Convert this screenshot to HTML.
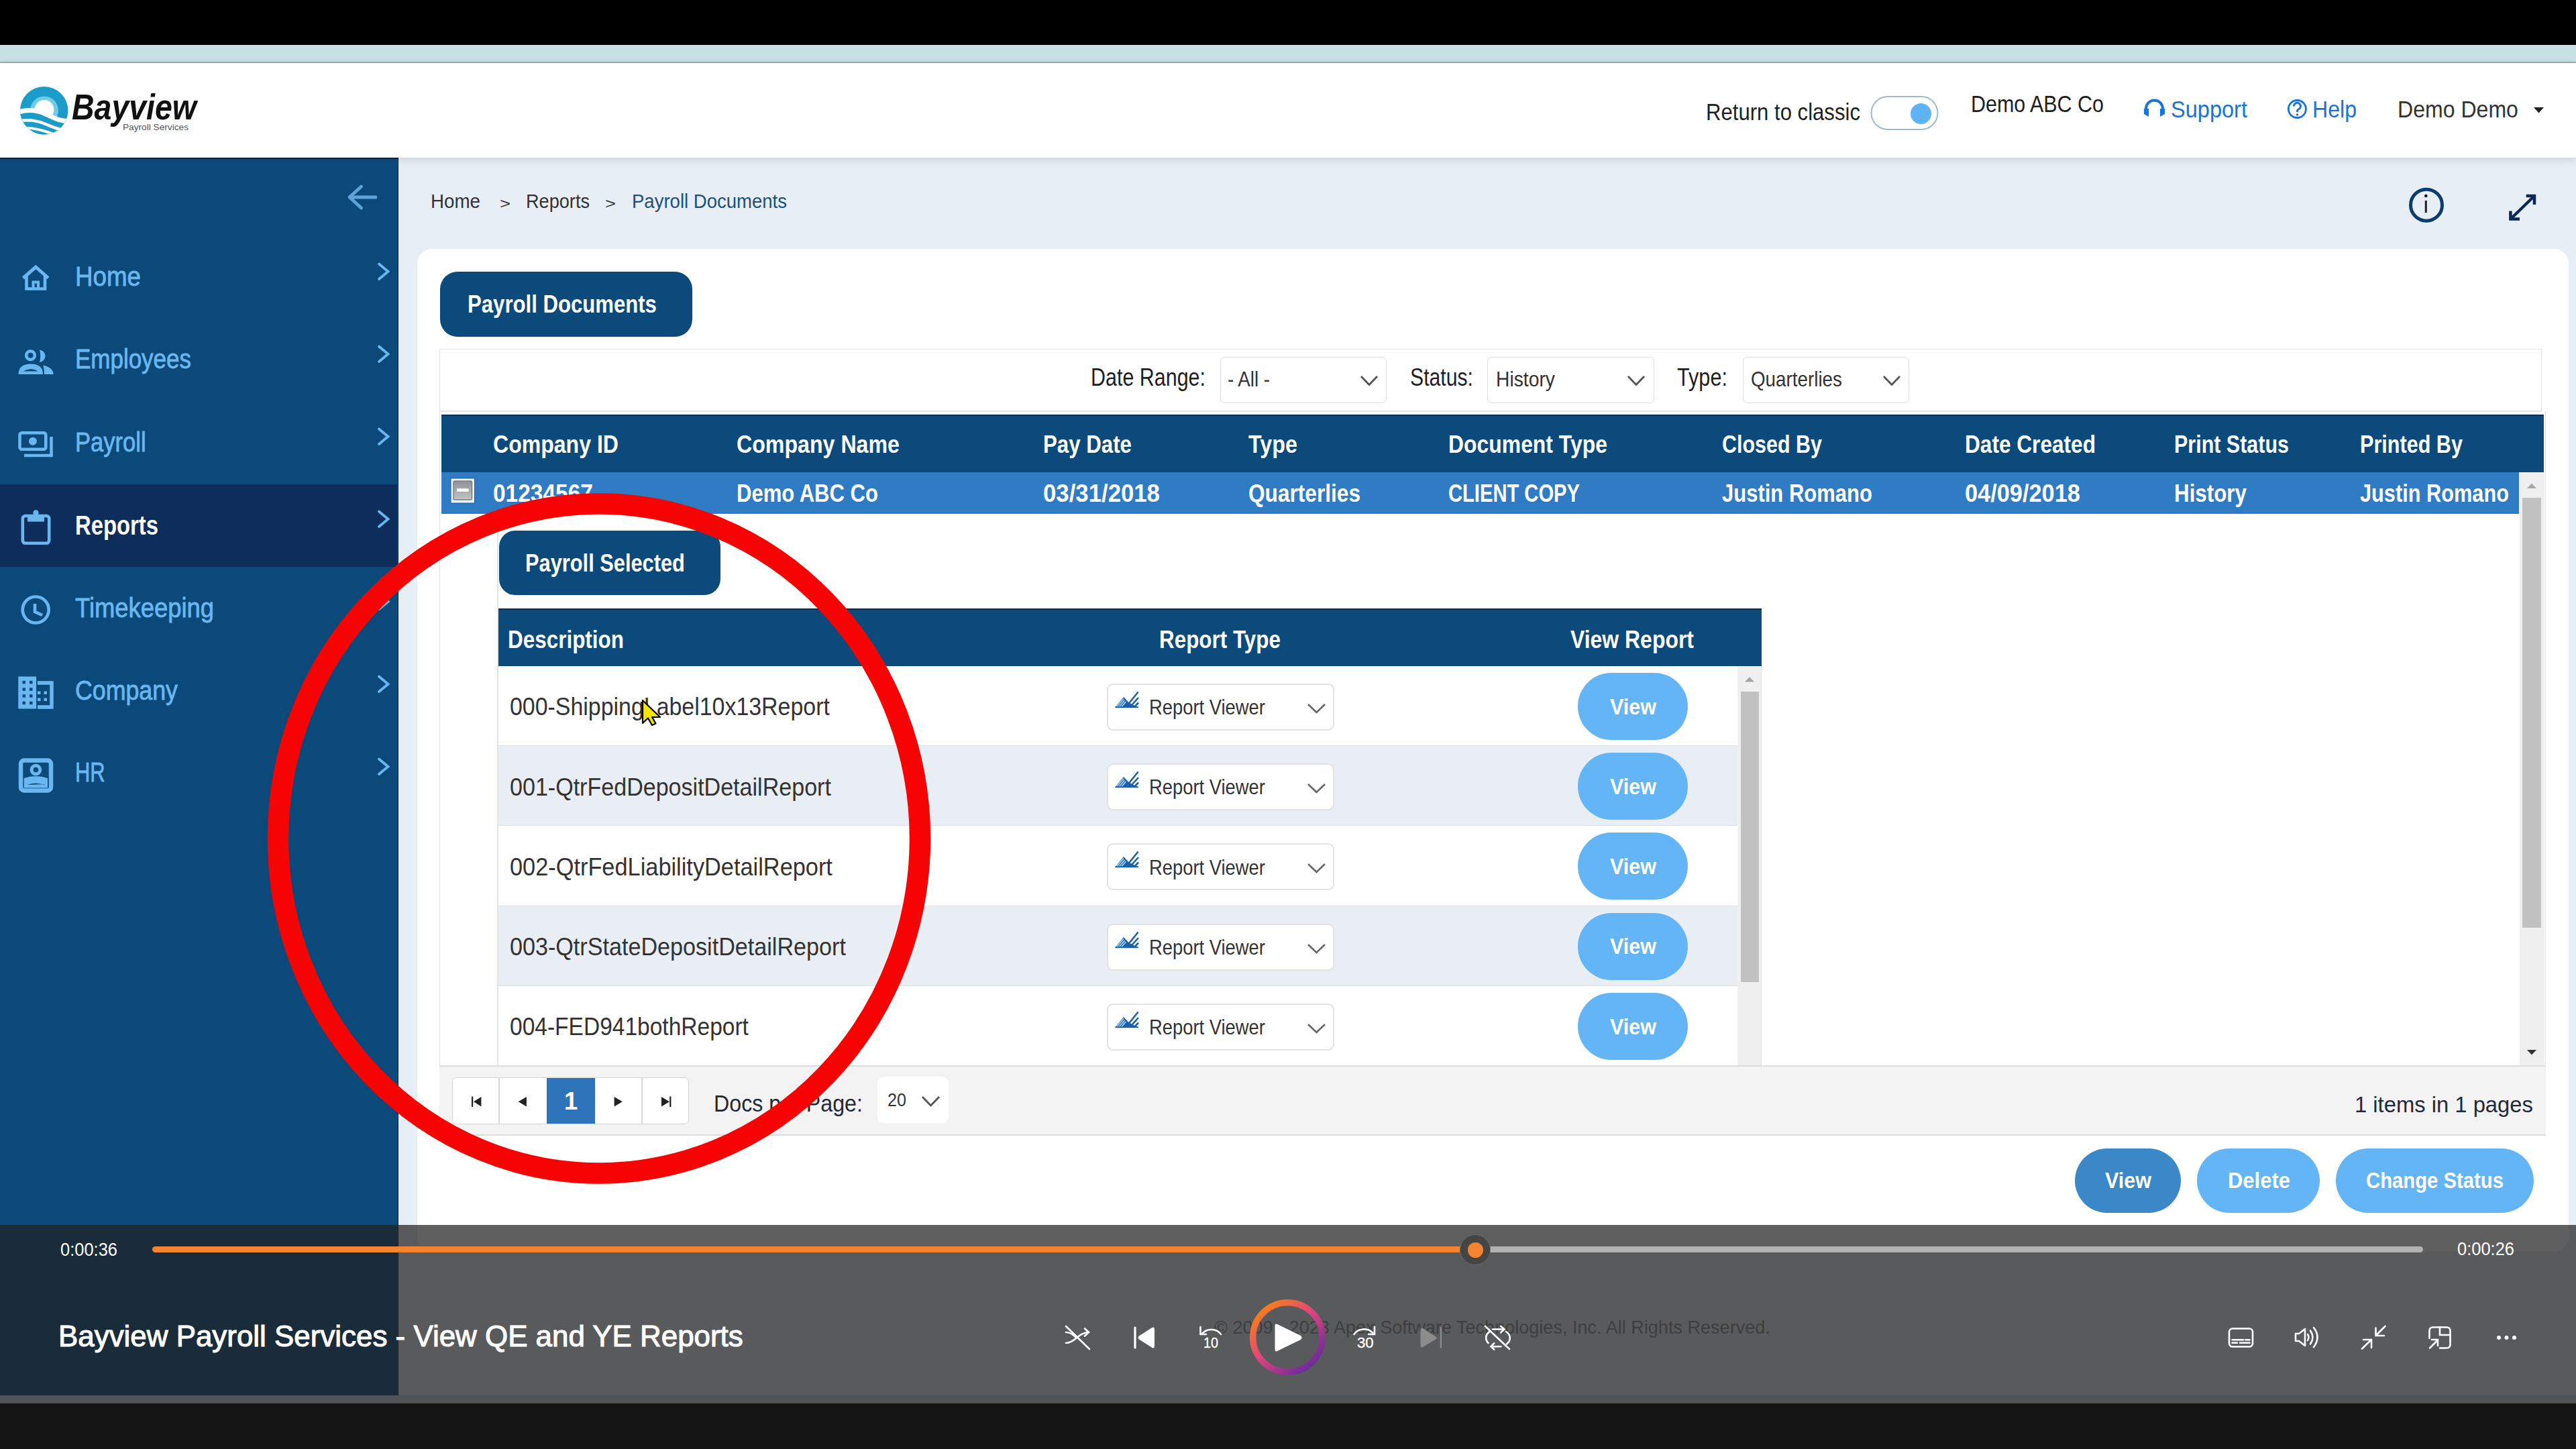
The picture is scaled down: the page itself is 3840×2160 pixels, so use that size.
<!DOCTYPE html>
<html><head><meta charset="utf-8">
<style>
*{margin:0;padding:0;box-sizing:border-box}
html,body{width:3840px;height:2160px;overflow:hidden;background:#e8eef5;font-family:"Liberation Sans",sans-serif}
.a{position:absolute}
.t{position:absolute;white-space:pre;line-height:1;transform-origin:0 0;font-family:"Liberation Sans",sans-serif;z-index:2}
svg{position:absolute;overflow:visible}
</style></head><body>
<!-- top bars -->
<div class="a" style="left:0;top:0;width:3840px;height:67px;background:#000"></div>
<div class="a" style="left:0;top:67px;width:3840px;height:25px;background:#c8dfe6"></div>
<div class="a" style="left:0;top:92px;width:3840px;height:2px;background:#a2abae"></div>
<div class="a" style="left:0;top:94px;width:3840px;height:141px;background:#fff;box-shadow:0 3px 12px rgba(0,0,0,0.13);z-index:1"></div>
<!-- sidebar -->
<div class="a" style="left:0;top:235px;width:594px;height:1845px;background:#0a497a;border-right:1px solid #08244c;border-top:2px solid #06204a;z-index:1"></div>
<div class="a" style="left:0;top:722px;width:592px;height:123px;background:#0d2d5b;z-index:1"></div>
<!-- card -->
<div class="a" style="left:622px;top:371px;width:3207px;height:1495px;background:#fff;border-radius:22px"></div>
<div class="a" style="left:656px;top:405px;width:376px;height:97px;background:#0b4a7b;border-radius:26px"></div>
<!-- filter box -->
<div class="a" style="left:655px;top:520px;width:3134px;height:94px;border:1.5px solid #e4e4e4;border-bottom:2px solid #e4e2ec"></div>
<div class="a" style="left:1819px;top:532px;width:248px;height:69px;border:1.5px solid #dedede;border-radius:7px;background:#fff"></div>
<div class="a" style="left:2217px;top:532px;width:249px;height:69px;border:1.5px solid #dedede;border-radius:7px;background:#fff"></div>
<div class="a" style="left:2598px;top:532px;width:248px;height:69px;border:1.5px solid #dedede;border-radius:7px;background:#fff"></div>
<!-- grid -->
<div class="a" style="left:655px;top:613px;width:3140px;height:1080px;border-left:1.5px solid #e0e0e0;border-right:1.5px solid #e0e0e0"></div>
<div class="a" style="left:658px;top:618px;width:3134px;height:86px;background:#0b4a7b;border-top:2px solid #08305a"></div>
<div class="a" style="left:658px;top:704px;width:3097px;height:62px;background:#2f7bc4"></div>
<div class="a" style="left:3756px;top:704px;width:37px;height:885px;background:#efefef"></div>
<div class="a" style="left:3760px;top:742px;width:28px;height:641px;background:#c1c1c1"></div>
<!-- detail left border -->
<div class="a" style="left:741px;top:766px;width:1.5px;height:823px;background:#e4e4e4"></div>
<div class="a" style="left:744px;top:791px;width:330px;height:96px;background:#0b4a7b;border-radius:24px"></div>
<!-- nested grid -->
<div class="a" style="left:743px;top:907px;width:1883px;height:86px;background:#0b4a7b;border-top:2px solid #08305a"></div>
<div id="rows"></div>
<div class="a" style="left:743px;top:993px;width:1847px;height:119px;background:#fff;border-bottom:1.5px solid #dde2e8"></div>
<div class="a" style="left:743px;top:1112px;width:1847px;height:119px;background:#e9eef5;border-bottom:1.5px solid #dde2e8"></div>
<div class="a" style="left:743px;top:1231px;width:1847px;height:120px;background:#fff;border-bottom:1.5px solid #dde2e8"></div>
<div class="a" style="left:743px;top:1351px;width:1847px;height:119px;background:#e9eef5;border-bottom:1.5px solid #dde2e8"></div>
<div class="a" style="left:743px;top:1470px;width:1847px;height:119px;background:#fff"></div>
<div class="a" style="left:2590px;top:993px;width:36px;height:596px;background:#f0f0f0;border-right:1.5px solid #e2e2e2"></div>
<div class="a" style="left:2595px;top:1031px;width:27px;height:433px;background:#c1c1c1"></div>
<!-- pager -->
<div class="a" style="left:655px;top:1588px;width:3140px;height:105px;background:#f3f3f3;border-top:2px solid #dcdcdc;border-bottom:2px solid #dcdcdc"></div>
<div class="a" style="left:674px;top:1606px;width:353px;height:70px;background:#fff;border:1.5px solid #d4d4d4;border-radius:7px"></div>
<div class="a" style="left:743px;top:1607px;width:1.5px;height:68px;background:#d8d8d8"></div>
<div class="a" style="left:815px;top:1607px;width:72px;height:68px;background:#2d74b9"></div>
<div class="a" style="left:956px;top:1607px;width:1.5px;height:68px;background:#d8d8d8"></div>
<div class="a" style="left:1308px;top:1605px;width:106px;height:69px;background:#fff;border-radius:9px"></div>
<!-- action buttons -->
<div class="a" style="left:3093px;top:1712px;width:158px;height:96px;background:#3a88c8;border-radius:48px"></div>
<div class="a" style="left:3275px;top:1712px;width:183px;height:96px;background:#64b5f6;border-radius:48px"></div>
<div class="a" style="left:3482px;top:1712px;width:295px;height:96px;background:#64b5f6;border-radius:48px"></div>
<div class="a" style="left:1650px;top:1019.0px;width:339px;height:70px;background:#fff;border:2px solid #e2e2e2;border-radius:9px"></div>
<div class="a" style="left:2352px;top:1003.0px;width:164px;height:100px;background:#64b5f6;border-radius:50px"></div>
<svg width="40" height="30" style="left:1660px;top:1029.0px;z-index:2" viewBox="0 0 40 30"><path d="M2.4,25.5 L15,10 L23,18.5 L36.6,25.5 Z" fill="#1c60ab"/><path d="M4.5,25 L15,12.5 M8,25 L16.5,15 M11.5,25 L18.5,17" stroke="#a8d6f5" stroke-width="1.6" fill="none"/><path d="M22.5,20 L36.6,2.5 M27,22 L37,11 M31,25 L37,18.5" stroke="#1c60ab" stroke-width="2.6" fill="none"/><rect x="2.4" y="24.2" width="34.5" height="2" fill="#1c60ab"/></svg>
<svg width="30" height="20" style="left:1948px;top:1048.0px;z-index:2" viewBox="0 0 30 20"><path d="M2,2 L14.5,14 L27,2" fill="none" stroke="#666" stroke-width="2.6"/></svg>
<div class="a" style="left:1650px;top:1138.2px;width:339px;height:70px;background:#fff;border:2px solid #e2e2e2;border-radius:9px"></div>
<div class="a" style="left:2352px;top:1122.2px;width:164px;height:100px;background:#64b5f6;border-radius:50px"></div>
<svg width="40" height="30" style="left:1660px;top:1148.2px;z-index:2" viewBox="0 0 40 30"><path d="M2.4,25.5 L15,10 L23,18.5 L36.6,25.5 Z" fill="#1c60ab"/><path d="M4.5,25 L15,12.5 M8,25 L16.5,15 M11.5,25 L18.5,17" stroke="#a8d6f5" stroke-width="1.6" fill="none"/><path d="M22.5,20 L36.6,2.5 M27,22 L37,11 M31,25 L37,18.5" stroke="#1c60ab" stroke-width="2.6" fill="none"/><rect x="2.4" y="24.2" width="34.5" height="2" fill="#1c60ab"/></svg>
<svg width="30" height="20" style="left:1948px;top:1167.2px;z-index:2" viewBox="0 0 30 20"><path d="M2,2 L14.5,14 L27,2" fill="none" stroke="#666" stroke-width="2.6"/></svg>
<div class="a" style="left:1650px;top:1257.4px;width:339px;height:70px;background:#fff;border:2px solid #e2e2e2;border-radius:9px"></div>
<div class="a" style="left:2352px;top:1241.4px;width:164px;height:100px;background:#64b5f6;border-radius:50px"></div>
<svg width="40" height="30" style="left:1660px;top:1267.4px;z-index:2" viewBox="0 0 40 30"><path d="M2.4,25.5 L15,10 L23,18.5 L36.6,25.5 Z" fill="#1c60ab"/><path d="M4.5,25 L15,12.5 M8,25 L16.5,15 M11.5,25 L18.5,17" stroke="#a8d6f5" stroke-width="1.6" fill="none"/><path d="M22.5,20 L36.6,2.5 M27,22 L37,11 M31,25 L37,18.5" stroke="#1c60ab" stroke-width="2.6" fill="none"/><rect x="2.4" y="24.2" width="34.5" height="2" fill="#1c60ab"/></svg>
<svg width="30" height="20" style="left:1948px;top:1286.4px;z-index:2" viewBox="0 0 30 20"><path d="M2,2 L14.5,14 L27,2" fill="none" stroke="#666" stroke-width="2.6"/></svg>
<div class="a" style="left:1650px;top:1376.6px;width:339px;height:70px;background:#fff;border:2px solid #e2e2e2;border-radius:9px"></div>
<div class="a" style="left:2352px;top:1360.6px;width:164px;height:100px;background:#64b5f6;border-radius:50px"></div>
<svg width="40" height="30" style="left:1660px;top:1386.6px;z-index:2" viewBox="0 0 40 30"><path d="M2.4,25.5 L15,10 L23,18.5 L36.6,25.5 Z" fill="#1c60ab"/><path d="M4.5,25 L15,12.5 M8,25 L16.5,15 M11.5,25 L18.5,17" stroke="#a8d6f5" stroke-width="1.6" fill="none"/><path d="M22.5,20 L36.6,2.5 M27,22 L37,11 M31,25 L37,18.5" stroke="#1c60ab" stroke-width="2.6" fill="none"/><rect x="2.4" y="24.2" width="34.5" height="2" fill="#1c60ab"/></svg>
<svg width="30" height="20" style="left:1948px;top:1405.6px;z-index:2" viewBox="0 0 30 20"><path d="M2,2 L14.5,14 L27,2" fill="none" stroke="#666" stroke-width="2.6"/></svg>
<div class="a" style="left:1650px;top:1495.8px;width:339px;height:70px;background:#fff;border:2px solid #e2e2e2;border-radius:9px"></div>
<div class="a" style="left:2352px;top:1479.8px;width:164px;height:100px;background:#64b5f6;border-radius:50px"></div>
<svg width="40" height="30" style="left:1660px;top:1505.8px;z-index:2" viewBox="0 0 40 30"><path d="M2.4,25.5 L15,10 L23,18.5 L36.6,25.5 Z" fill="#1c60ab"/><path d="M4.5,25 L15,12.5 M8,25 L16.5,15 M11.5,25 L18.5,17" stroke="#a8d6f5" stroke-width="1.6" fill="none"/><path d="M22.5,20 L36.6,2.5 M27,22 L37,11 M31,25 L37,18.5" stroke="#1c60ab" stroke-width="2.6" fill="none"/><rect x="2.4" y="24.2" width="34.5" height="2" fill="#1c60ab"/></svg>
<svg width="30" height="20" style="left:1948px;top:1524.8px;z-index:2" viewBox="0 0 30 20"><path d="M2,2 L14.5,14 L27,2" fill="none" stroke="#666" stroke-width="2.6"/></svg>
<div class="t" style="left:2543.0px;top:149.5px;font-size:34.88px;font-weight:400;color:#1f1f1f;transform:scaleX(0.8920);">Return to classic</div>
<div class="t" style="left:2938.0px;top:137.5px;font-size:34.88px;font-weight:400;color:#1f1f1f;transform:scaleX(0.8729);">Demo ABC Co</div>
<div class="t" style="left:3236.0px;top:145.5px;font-size:34.88px;font-weight:400;color:#1a73d6;transform:scaleX(0.9330);">Support</div>
<div class="t" style="left:3447.0px;top:145.5px;font-size:34.88px;font-weight:400;color:#1a73d6;transform:scaleX(0.9199);">Help</div>
<div class="t" style="left:3574.0px;top:145.5px;font-size:34.88px;font-weight:400;color:#333333;transform:scaleX(0.9193);">Demo Demo</div>
<div class="t" style="left:642.0px;top:286.4px;font-size:29.07px;font-weight:400;color:#333333;transform:scaleX(0.9543);">Home</div>
<div class="t" style="left:745.0px;top:292.6px;font-size:21.80px;font-weight:400;color:#333333;transform:scaleX(1.2565);">&gt;</div>
<div class="t" style="left:784.0px;top:286.4px;font-size:29.07px;font-weight:400;color:#333333;transform:scaleX(0.9333);">Reports</div>
<div class="t" style="left:902.0px;top:292.6px;font-size:21.80px;font-weight:400;color:#333333;transform:scaleX(1.2565);">&gt;</div>
<div class="t" style="left:942.0px;top:286.4px;font-size:29.07px;font-weight:400;color:#1d4f7c;transform:scaleX(0.9469);">Payroll Documents</div>
<div class="t" style="left:697.0px;top:435.1px;font-size:37.79px;font-weight:700;color:#ffffff;transform:scaleX(0.8238);">Payroll Documents</div>
<div class="t" style="left:1626.0px;top:545.3px;font-size:36.34px;font-weight:400;color:#1f1f1f;transform:scaleX(0.8381);">Date Range:</div>
<div class="t" style="left:2102.0px;top:545.3px;font-size:36.34px;font-weight:400;color:#1f1f1f;transform:scaleX(0.8310);">Status:</div>
<div class="t" style="left:2500.0px;top:545.3px;font-size:36.34px;font-weight:400;color:#1f1f1f;transform:scaleX(0.8438);">Type:</div>
<div class="t" style="left:1830.0px;top:549.0px;font-size:31.98px;font-weight:400;color:#333333;transform:scaleX(0.8649);">- All -</div>
<div class="t" style="left:2230.0px;top:549.0px;font-size:31.98px;font-weight:400;color:#333333;transform:scaleX(0.8845);">History</div>
<div class="t" style="left:2610.0px;top:549.0px;font-size:31.98px;font-weight:400;color:#333333;transform:scaleX(0.8696);">Quarterlies</div>
<div class="t" style="left:735.0px;top:645.3px;font-size:36.34px;font-weight:700;color:#ffffff;transform:scaleX(0.8821);">Company ID</div>
<div class="t" style="left:1098.0px;top:645.3px;font-size:36.34px;font-weight:700;color:#ffffff;transform:scaleX(0.8848);">Company Name</div>
<div class="t" style="left:1555.0px;top:645.3px;font-size:36.34px;font-weight:700;color:#ffffff;transform:scaleX(0.8599);">Pay Date</div>
<div class="t" style="left:1861.0px;top:645.3px;font-size:36.34px;font-weight:700;color:#ffffff;transform:scaleX(0.8890);">Type</div>
<div class="t" style="left:2159.0px;top:645.3px;font-size:36.34px;font-weight:700;color:#ffffff;transform:scaleX(0.8782);">Document Type</div>
<div class="t" style="left:2567.0px;top:645.3px;font-size:36.34px;font-weight:700;color:#ffffff;transform:scaleX(0.8385);">Closed By</div>
<div class="t" style="left:2929.0px;top:645.3px;font-size:36.34px;font-weight:700;color:#ffffff;transform:scaleX(0.8699);">Date Created</div>
<div class="t" style="left:3241.0px;top:645.3px;font-size:36.34px;font-weight:700;color:#ffffff;transform:scaleX(0.8386);">Print Status</div>
<div class="t" style="left:3518.0px;top:645.3px;font-size:36.34px;font-weight:700;color:#ffffff;transform:scaleX(0.8419);">Printed By</div>
<div class="t" style="left:735.0px;top:718.3px;font-size:36.34px;font-weight:700;color:#ffffff;transform:scaleX(0.9216);">01234567</div>
<div class="t" style="left:1098.0px;top:718.3px;font-size:36.34px;font-weight:700;color:#ffffff;transform:scaleX(0.8544);">Demo ABC Co</div>
<div class="t" style="left:1555.0px;top:718.3px;font-size:36.34px;font-weight:700;color:#ffffff;transform:scaleX(0.9567);">03/31/2018</div>
<div class="t" style="left:1861.0px;top:718.3px;font-size:36.34px;font-weight:700;color:#ffffff;transform:scaleX(0.8704);">Quarterlies</div>
<div class="t" style="left:2159.0px;top:718.3px;font-size:36.34px;font-weight:700;color:#ffffff;transform:scaleX(0.8023);">CLIENT COPY</div>
<div class="t" style="left:2567.0px;top:718.3px;font-size:36.34px;font-weight:700;color:#ffffff;transform:scaleX(0.8535);">Justin Romano</div>
<div class="t" style="left:2929.0px;top:718.3px;font-size:36.34px;font-weight:700;color:#ffffff;transform:scaleX(0.9457);">04/09/2018</div>
<div class="t" style="left:3241.0px;top:718.3px;font-size:36.34px;font-weight:700;color:#ffffff;transform:scaleX(0.8627);">History</div>
<div class="t" style="left:3518.0px;top:718.3px;font-size:36.34px;font-weight:700;color:#ffffff;transform:scaleX(0.8459);">Justin Romano</div>
<div class="t" style="left:783.0px;top:821.1px;font-size:37.79px;font-weight:700;color:#ffffff;transform:scaleX(0.8151);">Payroll Selected</div>
<div class="t" style="left:757.0px;top:935.1px;font-size:37.79px;font-weight:700;color:#ffffff;transform:scaleX(0.8322);">Description</div>
<div class="t" style="left:1728.0px;top:935.1px;font-size:37.79px;font-weight:700;color:#ffffff;transform:scaleX(0.8315);">Report Type</div>
<div class="t" style="left:2341.0px;top:935.1px;font-size:37.79px;font-weight:700;color:#ffffff;transform:scaleX(0.8452);">View Report</div>
<div class="t" style="left:760.0px;top:1036.3px;font-size:36.34px;font-weight:400;color:#333333;transform:scaleX(0.9332);">000-ShippingLabel10x13Report</div>
<div class="t" style="left:1713.0px;top:1039.2px;font-size:30.52px;font-weight:400;color:#333333;transform:scaleX(0.8971);">Report Viewer</div>
<div class="t" style="left:2400.0px;top:1036.8px;font-size:33.43px;font-weight:700;color:#ffffff;transform:scaleX(0.9130);">View</div>
<div class="t" style="left:760.0px;top:1155.5px;font-size:36.34px;font-weight:400;color:#333333;transform:scaleX(0.9374);">001-QtrFedDepositDetailReport</div>
<div class="t" style="left:1713.0px;top:1158.4px;font-size:30.52px;font-weight:400;color:#333333;transform:scaleX(0.8971);">Report Viewer</div>
<div class="t" style="left:2400.0px;top:1156.0px;font-size:33.43px;font-weight:700;color:#ffffff;transform:scaleX(0.9130);">View</div>
<div class="t" style="left:760.0px;top:1274.7px;font-size:36.34px;font-weight:400;color:#333333;transform:scaleX(0.9451);">002-QtrFedLiabilityDetailReport</div>
<div class="t" style="left:1713.0px;top:1277.6px;font-size:30.52px;font-weight:400;color:#333333;transform:scaleX(0.8971);">Report Viewer</div>
<div class="t" style="left:2400.0px;top:1275.2px;font-size:33.43px;font-weight:700;color:#ffffff;transform:scaleX(0.9130);">View</div>
<div class="t" style="left:760.0px;top:1393.9px;font-size:36.34px;font-weight:400;color:#333333;transform:scaleX(0.9396);">003-QtrStateDepositDetailReport</div>
<div class="t" style="left:1713.0px;top:1396.8px;font-size:30.52px;font-weight:400;color:#333333;transform:scaleX(0.8971);">Report Viewer</div>
<div class="t" style="left:2400.0px;top:1394.4px;font-size:33.43px;font-weight:700;color:#ffffff;transform:scaleX(0.9130);">View</div>
<div class="t" style="left:760.0px;top:1513.1px;font-size:36.34px;font-weight:400;color:#333333;transform:scaleX(0.9227);">004-FED941bothReport</div>
<div class="t" style="left:1713.0px;top:1516.0px;font-size:30.52px;font-weight:400;color:#333333;transform:scaleX(0.8971);">Report Viewer</div>
<div class="t" style="left:2400.0px;top:1513.6px;font-size:33.43px;font-weight:700;color:#ffffff;transform:scaleX(0.9130);">View</div>
<div class="t" style="left:1064.0px;top:1627.5px;font-size:34.88px;font-weight:400;color:#1f2a3a;transform:scaleX(0.9233);">Docs per Page:</div>
<div class="t" style="left:1323.0px;top:1625.7px;font-size:27.62px;font-weight:400;color:#333333;transform:scaleX(0.9115);">20</div>
<div class="t" style="left:3510.0px;top:1629.8px;font-size:33.43px;font-weight:400;color:#1f2a3a;transform:scaleX(0.9804);">1 items in 1 pages</div>
<div class="t" style="left:3138.0px;top:1742.8px;font-size:33.43px;font-weight:700;color:#ffffff;transform:scaleX(0.9130);">View</div>
<div class="t" style="left:3321.0px;top:1742.8px;font-size:33.43px;font-weight:700;color:#ffffff;transform:scaleX(0.9268);">Delete</div>
<div class="t" style="left:3527.0px;top:1742.8px;font-size:33.43px;font-weight:700;color:#ffffff;transform:scaleX(0.8759);">Change Status</div>
<div class="t" style="left:111.8px;top:393.2px;font-size:39.97px;font-weight:400;color:#6ab7ef;transform:scaleX(0.9191);-webkit-text-stroke:0.8px #6ab7ef;">Home</div>
<div class="t" style="left:111.8px;top:516.2px;font-size:39.97px;font-weight:400;color:#6ab7ef;transform:scaleX(0.8749);-webkit-text-stroke:0.8px #6ab7ef;">Employees</div>
<div class="t" style="left:111.8px;top:640.2px;font-size:39.97px;font-weight:400;color:#6ab7ef;transform:scaleX(0.8643);-webkit-text-stroke:0.8px #6ab7ef;">Payroll</div>
<div class="t" style="left:111.8px;top:763.7px;font-size:39.97px;font-weight:700;color:#ffffff;transform:scaleX(0.8210);">Reports</div>
<div class="t" style="left:111.8px;top:886.7px;font-size:39.97px;font-weight:400;color:#6ab7ef;transform:scaleX(0.9105);-webkit-text-stroke:0.8px #6ab7ef;">Timekeeping</div>
<div class="t" style="left:111.8px;top:1009.6px;font-size:39.97px;font-weight:400;color:#6ab7ef;transform:scaleX(0.8944);-webkit-text-stroke:0.8px #6ab7ef;">Company</div>
<div class="t" style="left:111.8px;top:1132.2px;font-size:39.97px;font-weight:400;color:#6ab7ef;transform:scaleX(0.7743);-webkit-text-stroke:0.8px #6ab7ef;">HR</div>
<div class="t" style="left:841.0px;top:1623.9px;font-size:36.34px;font-weight:700;color:#ffffff;transform:scaleX(1.0000);">1</div>
<div class="t" style="left:107.0px;top:132.7px;font-size:53.05px;font-weight:700;color:#111111;transform:scaleX(0.8759);font-style:italic;">Bayview</div>
<div class="t" style="left:183.0px;top:182.9px;font-size:13.08px;font-weight:400;color:#555555;transform:scaleX(1.0450);">Payroll Services</div>
<div class="t" style="left:1793.8px;top:1991.4px;font-size:21.80px;font-weight:400;color:#ffffff;transform:scaleX(0.9072);z-index:6;-webkit-text-stroke:0.4px #fff;">10</div>
<div class="t" style="left:2023.0px;top:1991.4px;font-size:21.80px;font-weight:400;color:#ffffff;transform:scaleX(1.0185);z-index:6;-webkit-text-stroke:0.4px #fff;">30</div>
<div class="t" style="left:1810.0px;top:1964.7px;font-size:27.62px;font-weight:400;color:#898989;transform:scaleX(0.9802);z-index:1;">&copy; 2009 - 2023 Apex Software Technologies, Inc. All Rights Reserved.</div>
<div class="t" style="left:90.0px;top:1850.3px;font-size:26.89px;font-weight:400;color:#ffffff;transform:scaleX(0.9474);z-index:5;">0:00:36</div>
<div class="t" style="left:3663.0px;top:1849.3px;font-size:26.89px;font-weight:400;color:#ffffff;transform:scaleX(0.9474);z-index:5;">0:00:26</div>
<div class="t" style="left:87.0px;top:1968.9px;font-size:45.06px;font-weight:400;color:#ffffff;transform:scaleX(0.9746);z-index:5;-webkit-text-stroke:1.1px #fff;">Bayview Payroll Services - View QE and YE Reports</div>
<!-- ICONS -->
<svg width="3840" height="2160" style="left:0;top:0;z-index:2" viewBox="0 0 3840 2160">
 <!-- logo -->
 <defs><clipPath id="lc"><circle cx="65.7" cy="164.7" r="35.7"/></clipPath></defs>
 <circle cx="65.7" cy="164.7" r="35.7" fill="#1b9cc8"/>
 <circle cx="66" cy="164.5" r="21" fill="#6fcbe6"/>
 <circle cx="66" cy="163.5" r="14.4" fill="#fff"/>
 <g clip-path="url(#lc)">
  <path d="M25,170 C42,164 55,166 68,172 S92,184 106,182 V210 H25 Z" fill="#1b9cc8"/>
  <path d="M25,168 C42,162 55,164 68,170 S92,182 106,180" fill="none" stroke="#fff" stroke-width="7"/>
  <path d="M25,181 C42,177 55,180 68,185 S90,195 106,194" fill="none" stroke="#fff" stroke-width="4.5"/>
  <path d="M25,192 C42,189 55,192 68,196 S88,204 106,204" fill="none" stroke="#fff" stroke-width="4"/>
 </g>
 <!-- toggle -->
 <rect x="2789.5" y="144" width="99" height="49" rx="24.5" fill="#fff" stroke="#9dbad0" stroke-width="2"/>
 <circle cx="2863.5" cy="169.5" r="15.5" fill="#5fb2f4"/>
 <!-- support headset -->
 <path d="M3199,168 V162 A12.5,12.5 0 0 1 3224,162 V168" fill="none" stroke="#1a73d6" stroke-width="4"/>
 <path d="M3196,162 h7 v12 l-7,-4 z M3227,162 h-7 v12 l7,-4 z" fill="#1a73d6"/>
 <!-- help circle -->
 <circle cx="3424.4" cy="162.5" r="13" fill="none" stroke="#1a73d6" stroke-width="2.8"/>
 <path d="M3419.5,158.5 A5,5 0 1 1 3426,163 Q3424.4,164 3424.4,167" fill="none" stroke="#1a73d6" stroke-width="3"/>
 <circle cx="3424.4" cy="171" r="1.8" fill="#1a73d6"/>
 <!-- caret -->
 <path d="M3777,160 H3792 L3784.5,168.5 Z" fill="#222"/>
 <!-- back arrow -->
 <path d="M560,294 H521 M538.6,278 L521,294 L538.6,310" fill="none" stroke="#5fa3d8" stroke-width="4.8" stroke-linecap="round" stroke-linejoin="round"/>
 <!-- info -->
 <circle cx="3617" cy="305.7" r="23.5" fill="none" stroke="#0b3d6e" stroke-width="5"/>
 <circle cx="3616.3" cy="292" r="2.3" fill="#111"/>
 <rect x="3614.8" y="299" width="3" height="18" fill="#222"/>
 <!-- expand -->
 <path d="M3744,325 L3776.5,293.5 M3765.7,292 H3778 V305 M3742.4,314.5 V326.6 H3756" fill="none" stroke="#0a2a55" stroke-width="4.5"/>
 <!-- sidebar icons -->
 <g fill="none" stroke="#6ab7ef" stroke-width="4.6">
  <path d="M34.5,414.5 L53.3,398 L72,414.5" stroke-width="5"/>
  <path d="M39.5,409 V430.5 H67 V409"/><path d="M49.5,431 V420.5 H57 V431" stroke-width="4"/>
  <circle cx="45.5" cy="529.7" r="6.3"/>
  <rect x="30" y="31" width="0" height="0"/>
  <rect x="29.5" y="645.3" width="38.8" height="24.4" rx="3"/>
  <path d="M76.5,651 V679 H36"/>
  <rect x="33.8" y="769" width="39.4" height="40.8" rx="4"/>
  <circle cx="53.2" cy="909" r="19.5"/>
  <path d="M52,900 V912 L63,917"/>
  <rect x="31" y="1133.5" width="45" height="45" rx="5" stroke-width="6.5"/>
  <circle cx="53.4" cy="1147.5" r="6.3" stroke-width="5"/>
  <path d="M56,1018 H77 V1054 H56" stroke-width="5.5"/>
 </g>
 <g fill="#6ab7ef">
  <path d="M59,521.5 A9.5,9.3 0 0 1 59,540 Q61.5,531 59,521.5 Z"/>
  <path d="M27.5,558 Q27.5,542.5 46,542.5 Q64,542.5 64,558 Z M34.5,553.5 Q46,546.5 57,553.5 Z" fill-rule="evenodd"/>
  <path d="M64.5,544.5 Q79.6,548 79.6,558 H66 Q66,551 64.5,544.5 Z"/>
  <circle cx="48.9" cy="657.8" r="6"/>
  <rect x="41" y="767" width="25" height="10.6"/>
  <circle cx="53.5" cy="764.5" r="4.2"/>
  <path d="M27.2,1008.5 H54.1 V1056.4 H27.2 Z"/>
  <path d="M35.7,1160 Q53,1154 71,1160 V1174.4 H35.7 Z"/>
 </g>
 <g fill="#0b4a7b">
  <rect x="33.5" y="1014.8" width="4.5" height="4.5"/><rect x="44" y="1014.8" width="4.5" height="4.5"/>
  <rect x="33.5" y="1025.3" width="4.5" height="4.5"/><rect x="44" y="1025.3" width="4.5" height="4.5"/>
  <rect x="33.5" y="1035.2" width="4.5" height="4.5"/><rect x="44" y="1035.2" width="4.5" height="4.5"/>
  <rect x="33.5" y="1045.7" width="4.5" height="4.5"/><rect x="44" y="1045.7" width="4.5" height="4.5"/>
  <path d="M40.5,1170 Q53,1165 66,1170 V1169 Z"/>
 </g>
 <g fill="#6ab7ef"><rect x="56" y="1030.5" width="4.5" height="4.5"/><rect x="65.5" y="1030.5" width="4.5" height="4.5"/><rect x="56" y="1040.5" width="4.5" height="4.5"/><rect x="65.5" y="1040.5" width="4.5" height="4.5"/></g>
 <!-- sidebar chevrons -->
 <g fill="none" stroke="#6ab7ef" stroke-width="3.8" stroke-linecap="round">
  <path d="M565,393.5 L578.5,404.8 L565,416"/>
  <path d="M565,516.5 L578.5,527.8 L565,539"/>
  <path d="M565,639.5 L578.5,650.8 L565,662"/>
  <path d="M565,762.5 L578.5,773.8 L565,785"/>
  <path d="M565,885.5 L578.5,896.8 L565,908"/>
  <path d="M565,1008.5 L578.5,1019.8 L565,1031"/>
  <path d="M565,1131.5 L578.5,1142.8 L565,1154"/>
 </g>
 <!-- filter chevrons -->
 <g fill="none" stroke="#555" stroke-width="2.8">
  <path d="M2029,561 L2041,573.5 L2053,561"/>
  <path d="M2427,561 L2439,573.5 L2451,561"/>
  <path d="M2808,561 L2820,573.5 L2832,561"/>
  <path d="M1375,1635 L1387.5,1648 L1400,1635"/>
 </g>
 <!-- checkbox -->
 <rect x="672" y="713" width="35.5" height="37" fill="#eaf4fb" stroke="#1b5f9c" stroke-width="1"/>
 <defs><linearGradient id="cbg" x1="0" y1="0" x2="0" y2="1"><stop offset="0" stop-color="#8e9197"/><stop offset="1" stop-color="#c4c4c4"/></linearGradient></defs>
 <rect x="676" y="717" width="27.5" height="28" rx="2" fill="url(#cbg)" stroke="#808080" stroke-width="1.5"/>
 <rect x="681" y="728.3" width="17.6" height="4.6" fill="#fff"/>
 <!-- pager icons -->
 <g fill="#222">
  <rect x="703" y="1634.5" width="2.2" height="15.5"/><path d="M717.4,1635 V1649.6 L706,1642.3 Z"/>
  <path d="M784.9,1635 V1649.6 L772.7,1642.3 Z"/>
  <path d="M915.6,1635 V1649.6 L927.8,1642.3 Z"/>
  <path d="M986,1635 V1649.6 L998,1642.3 Z"/><rect x="998.2" y="1634.5" width="2.2" height="15.5"/>
 </g>
 <!-- main grid scroll arrows -->
 <path d="M3767,728 L3774,720.5 L3781,728 Z" fill="#a8a8a8"/>
 <path d="M3767,1565 L3781,1565 L3774,1572.5 Z" fill="#333"/>
 <path d="M2601,1016.5 L2608,1009 L2615,1016.5 Z" fill="#a8a8a8"/>
 <!-- cursor -->
 <path d="M958,1044 L958,1078 L966,1070.5 L972,1081 L977.5,1078.5 L972,1069 L984,1069 Z" fill="#f2e600" stroke="#000" stroke-width="2.2" stroke-linejoin="round" style="z-index:9"/>
</svg>
<!-- VIDEO ICONS -->
<svg width="3840" height="2160" style="left:0;top:0;z-index:6" viewBox="0 0 3840 2160">
 <defs>
  <linearGradient id="pg" x1="0.15" y1="0.1" x2="0.85" y2="0.9">
   <stop offset="0" stop-color="#f47c20"/><stop offset="0.45" stop-color="#e0457a"/><stop offset="1" stop-color="#6e2c9c"/>
  </linearGradient>
 </defs>
 <circle cx="1919.5" cy="1993.5" r="51.8" fill="none" stroke="url(#pg)" stroke-width="9.5"/>
 <path d="M1904,1974 Q1900.5,1972 1900.5,1977 V2011 Q1900.5,2016 1904,2014 L1939,1997 Q1942,1994 1939,1991 Z" fill="#fff"/>
 <g fill="none" stroke="#fff" stroke-width="2.6" stroke-linecap="round">
  <!-- shuffle off -->
  <path d="M1589,1977 L1624,2011"/>
  <path d="M1589,2002 C1602,2002 1608,1986 1623,1986"/>
  <path d="M1589,1986 C1596,1986 1600,1990 1604,1994"/>
  <path d="M1617,1980.5 L1623,1986 L1617,1991.5"/>
  <!-- rewind -->
  <path d="M1792,1988 A17,15 0 0 1 1820,1989"/>
  <path d="M1789.5,1978 V1989 H1798"/>
  <!-- fwd -->
  <path d="M2018.5,1989 A17,15 0 0 1 2046.5,1987"/>
  <path d="M2049,1978 V1989 H2040"/>
  <!-- repeat off -->
  <path d="M2214,1977 L2250,2011"/>
  <path d="M2225,1981.5 H2242.5 M2237.4,1977 L2242.5,1981.5 L2237.4,1986.3"/>
  <path d="M2245,1985 A13,11.5 0 0 1 2246,2003.5"/>
  <path d="M2237.5,2007.2 H2222.5 M2227.2,2002.5 L2222.5,2007.2 L2227.2,2011.5"/>
  <path d="M2218.5,2002 A13,11.5 0 0 1 2221.5,1984.5"/>
  <!-- cc -->
  <rect x="3323" y="1980.5" width="35" height="27" rx="5"/>
  <path d="M3327.5,1997.3 H3344.5 M3347.5,1997.3 H3353.5 M3327.5,2001.8 H3335 M3339,2001.8 H3353.5"/>
  <!-- volume -->
  <path d="M3422,1988 H3427 L3436,1981 V2006 L3427,1999 H3422 Z" stroke-linejoin="round"/>
  <path d="M3440,1989 Q3443,1993.5 3440,1998"/>
  <path d="M3444,1983.5 Q3451,1993.5 3444,2003.5"/>
  <path d="M3449,1979 Q3460,1993.5 3449,2008"/>
  <!-- compress -->
  <path d="M3555.5,1977 L3541.5,1991 M3541.5,1979.5 V1991 H3554"/>
  <path d="M3521,2010.5 L3535,1997 M3523,1997 H3535 V2009"/>
  <!-- mini player -->
  <path d="M3621.5,1995 V1984 Q3621.5,1978.5 3627,1978.5 H3647 Q3652.5,1978.5 3652.5,1984 V2004 Q3652.5,2009.5 3647,2009.5 H3637"/>
  <path d="M3637,1978.5 V1990 H3652.5"/>
  <path d="M3622,2009.5 L3634,1997.5 M3625,1997 H3634 V2006"/>
 </g>
 <path d="M1692,1979 V2009" stroke="#fff" stroke-width="3.2" stroke-linecap="round"/>
 <path d="M1717.5,1979 Q1721,1977 1721,1982 V2006 Q1721,2011 1717.5,2009 L1698,1996.5 Q1695,1994 1698,1991.5 Z" fill="#fff"/>
 <path d="M2121,1980 Q2117.5,1978 2117.5,1983 V2005 Q2117.5,2010 2121,2008 L2140,1996.5 Q2143,1994.5 2140,1992.5 Z" fill="#8c8c8c"/>
 <rect x="2146.8" y="1978.5" width="2.2" height="31" fill="#8c8c8c"/>
 <g fill="#fff"><circle cx="3725" cy="1994" r="3"/><circle cx="3736.5" cy="1994" r="3"/><circle cx="3748" cy="1994" r="3"/></g>
</svg>

<!-- red ellipse -->
<svg width="3840" height="2160" style="left:0;top:0;z-index:3" viewBox="0 0 3840 2160"><ellipse cx="893" cy="1250" rx="478.5" ry="499" fill="none" stroke="#f60404" stroke-width="31.5"/></svg>
<!-- video overlay -->
<div class="a" style="left:0;top:1826px;width:3840px;height:254px;background:rgba(33,33,33,0.72);z-index:4"></div>
<div class="a" style="left:0;top:2080px;width:3840px;height:12px;background:#4e5458;z-index:4"></div>
<div class="a" style="left:0;top:2092px;width:3840px;height:68px;background:#141414;z-index:4"></div>
<div class="a" style="left:227px;top:1858px;width:1972px;height:9px;background:#f5832f;border-radius:5px;z-index:5"></div>
<div class="a" style="left:2199px;top:1858px;width:1413px;height:9px;background:#b3b3b3;border-radius:5px;z-index:5"></div>
<div class="a" style="left:2176px;top:1840px;width:46px;height:46px;background:#454545;border:1px solid #6a6a6a;border-radius:50%;z-index:6"></div>
<div class="a" style="left:2187.5px;top:1851.5px;width:23px;height:23px;background:#f5832f;border-radius:50%;z-index:7"></div>
</body></html>
